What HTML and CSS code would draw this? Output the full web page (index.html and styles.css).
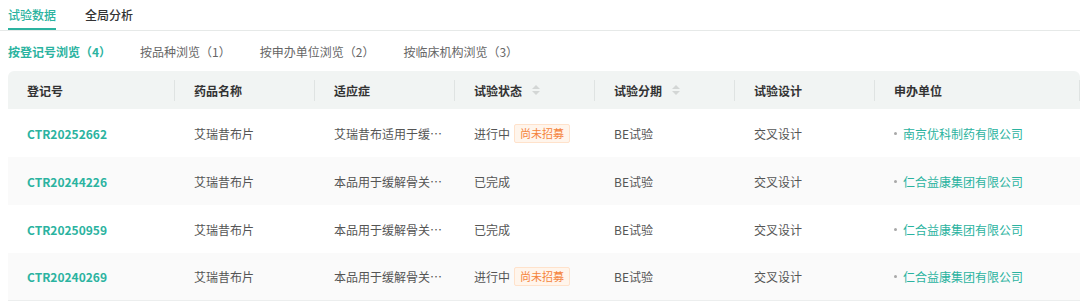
FILE: index.html
```html
<!DOCTYPE html>
<html lang="zh-CN">
<head>
<meta charset="utf-8">
<link rel="stylesheet" href="styles.css">
</head>
<body>
<div class="page">
  <nav class="tabs">
    <span class="tab active">试验数据</span>
    <span class="tab">全局分析</span>
  </nav>
  <div class="subtabs">
    <span class="sub active">按登记号浏览（4）</span>
    <span class="sub">按品种浏览（1）</span>
    <span class="sub">按申办单位浏览（2）</span>
    <span class="sub">按临床机构浏览（3）</span>
  </div>
  <div class="table">
    <div class="row head">
      <div class="cell c1">登记号</div>
      <div class="cell">药品名称</div>
      <div class="cell">适应症</div>
      <div class="cell">试验状态<span class="sort"><i class="up"></i><i class="down"></i></span></div>
      <div class="cell">试验分期<span class="sort"><i class="up"></i><i class="down"></i></span></div>
      <div class="cell">试验设计</div>
      <div class="cell last">申办单位</div>
    </div>
    <div class="row">
      <div class="cell c1 link">CTR20252662</div>
      <div class="cell">艾瑞昔布片</div>
      <div class="cell">艾瑞昔布适用于缓…</div>
      <div class="cell">进行中<span class="badge">尚未招募</span></div>
      <div class="cell">BE试验</div>
      <div class="cell">交叉设计</div>
      <div class="cell last"><span class="dot"></span><span class="co">南京优科制药有限公司</span></div>
    </div>
    <div class="row alt">
      <div class="cell c1 link">CTR20244226</div>
      <div class="cell">艾瑞昔布片</div>
      <div class="cell">本品用于缓解骨关…</div>
      <div class="cell">已完成</div>
      <div class="cell">BE试验</div>
      <div class="cell">交叉设计</div>
      <div class="cell last"><span class="dot"></span><span class="co">仁合益康集团有限公司</span></div>
    </div>
    <div class="row">
      <div class="cell c1 link">CTR20250959</div>
      <div class="cell">艾瑞昔布片</div>
      <div class="cell">本品用于缓解骨关…</div>
      <div class="cell">已完成</div>
      <div class="cell">BE试验</div>
      <div class="cell">交叉设计</div>
      <div class="cell last"><span class="dot"></span><span class="co">仁合益康集团有限公司</span></div>
    </div>
    <div class="row alt">
      <div class="cell c1 link">CTR20240269</div>
      <div class="cell">艾瑞昔布片</div>
      <div class="cell">本品用于缓解骨关…</div>
      <div class="cell">进行中<span class="badge">尚未招募</span></div>
      <div class="cell">BE试验</div>
      <div class="cell">交叉设计</div>
      <div class="cell last"><span class="dot"></span><span class="co">仁合益康集团有限公司</span></div>
    </div>
  </div>
</div>
</body>
</html>
```
FILE: styles.css
```css
* { box-sizing: border-box; }
html, body { margin: 0; padding: 0; background: #fff; }
body {
  font-family: "Noto Sans CJK SC", "Noto Sans", sans-serif;
  color: #555;
  overflow: hidden;
}
.page { width: 1080px; }
.tabs {
  display: flex;
  gap: 29px;
  padding-left: 8px;
  height: 31px;
  border-bottom: 1px solid #e6e9e8;
}
.tab {
  font-size: 12px;
  line-height: 29px;
  color: #333;
  font-weight: 500;
  border-bottom: 2px solid transparent;
}
.tab.active { color: #2bb3a0; border-bottom-color: #2bb3a0; }
.subtabs {
  display: flex;
  gap: 29px;
  padding: 11px 0 0 8px;
  height: 40px;
}
.sub { font-size: 12px; line-height: 20px; color: #666; }
.sub.active { color: #2bb3a0; font-weight: 700; }
.table { width: 1072px; margin-left: 8px; border-bottom: 1px solid #eceeee; }
.row {
  display: grid;
  grid-template-columns: 166px 140px 140px 140px 140px 140px 206px;
  height: 48px;
  align-items: center;
}
.row.head {
  height: 38px;
  background: #f1f4f3;
  border-radius: 6px 6px 0 0;
}
.row.alt { background: #fafafa; }
.row.alt:last-child { height: 47px; }
.cell {
  padding-left: 20px;
  font-size: 12px;
  color: #555;
  display: flex;
  align-items: center;
  white-space: nowrap;
  height: 100%;
}
.cell.c1 { padding-left: 19px; }
.head .cell {
  font-size: 12px;
  font-weight: 700;
  color: #333;
  position: relative;
}
.head .cell + .cell::before {
  content: "";
  position: absolute;
  left: 0;
  top: 9px;
  height: 21px;
  width: 1px;
  background: #dfe3e2;
}
.head .cell.last::after {
  content: "";
  position: absolute;
  right: 0;
  top: 9px;
  height: 21px;
  width: 1px;
  background: #dfe3e2;
}
.sort {
  display: inline-flex;
  flex-direction: column;
  gap: 2px;
  margin-left: 10px;
}
.sort i {
  width: 0; height: 0;
  border-left: 4px solid transparent;
  border-right: 4px solid transparent;
}
.sort .up { border-bottom: 4px solid #d3d6d5; }
.sort .down { border-top: 4px solid #d3d6d5; }
.link { color: #2bb3a0; font-weight: 700; font-size: 12px; }
.badge {
  margin-left: 4px;
  padding: 0 5px;
  font-size: 11px;
  line-height: 17px;
  color: #f5843c;
  background: #fff5ec;
  border: 1px solid #ffe2cb;
  border-radius: 2px;
}
.dot {
  width: 3px;
  height: 3px;
  border-radius: 50%;
  background: #a8a8a8;
  margin-right: 6px;
}
.co { color: #2bb3a0; }
```
